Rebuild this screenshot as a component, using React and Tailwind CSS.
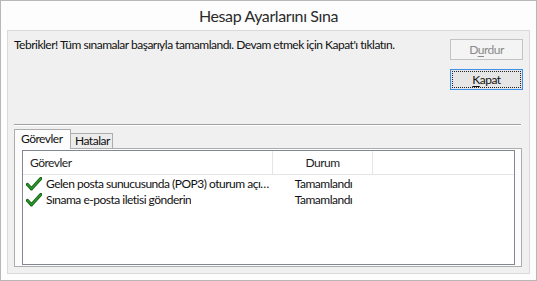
import React from "react";

function Check() {
  return (
    <svg width="16" height="14" viewBox="0 0 16 14" className="shrink-0">
      <path d="M1.5 7.5 L5.5 11.8 L14.8 1.5" fill="none" stroke="#0e5e0e" strokeWidth="3.2" strokeLinecap="round" strokeLinejoin="round" />
      <path d="M1.5 7.5 L5.5 11.8 L14.8 1.5" fill="none" stroke="#2e9a2e" strokeWidth="1.4" strokeLinecap="round" strokeLinejoin="round" />
    </svg>
  );
}

export default function App() {
  const rows = [
    "Gelen posta sunucusunda (POP3) oturum açı…",
    "Sınama e-posta iletisi gönderin",
  ];
  return (
    <div
      className="w-[537px] h-[281px] bg-[#fdfdfd] border border-[#b7b7b7] flex flex-col text-[12px] text-[#111] whitespace-nowrap tracking-[-0.5px]"
      style={{ fontFamily: 'Lato, "Noto Sans", sans-serif' }}
    >
      <div className="h-[29px] flex items-center justify-center text-[16px] tracking-[-0.4px] text-[#2b2b2b] pt-[1px]">
        Hesap Ayarlarını Sına
      </div>
      <div className="mx-[6px] h-[244px] border border-[#dadada] bg-[#f0f0f0] flex flex-col">
        <div className="pt-[8px] pl-[6px] pr-[6px] flex justify-between">
          <div className="flex-1 min-w-0 mt-[-2px] leading-[16px]">
            Tebrikler! Tüm sınamalar başarıyla tamamlandı. Devam etmek için Kapat'ı tıklatın.
          </div>
          <div className="shrink-0 flex flex-col gap-[9px]">
            <div className="w-[73px] h-[21px] border border-[#c4c4c4] bg-[#f4f4f4] text-[#8a8a8a] flex items-center justify-center leading-none">
              <span>D<span className="underline underline-offset-2">u</span>rdur</span>
            </div>
            <div className="w-[73px] h-[21px] border border-[#3c8fe6] bg-[#e6e6e6] p-[1px]">
              <div className="w-full h-full border border-dotted border-[#222] flex items-center justify-center leading-none">
                <span><span className="underline underline-offset-2">K</span>apat</span>
              </div>
            </div>
          </div>
        </div>
        <div className="mt-[34px] ml-[6px] mr-[8px] h-px bg-[#a0a0a0]" />
        <div className="ml-[6px] mr-[8px] h-px bg-[#ffffff]" />
        <div className="mt-[3px] ml-[6px] h-[19px] flex items-start relative z-10">
          <div className="w-[57px] h-[20px] bg-[#fcfcfc] border border-b-0 border-[#adadad] pl-[6px] pt-[1px] leading-[16px]">
            Görevler
          </div>
          <div className="mt-[4px] w-[42px] h-[15px] bg-[#ececec] border border-l-0 border-b-0 border-[#adadad] pl-[4px] leading-[14px]">
            Hatalar
          </div>
        </div>
        <div className="ml-[6px] mr-[7px] h-[119px] border border-[#adadad] bg-[#fcfcfc] pt-[1px] pl-[7px] pr-[6px] pb-[1px]">
          <div className="h-[115px] border border-[#828790] bg-white flex flex-col">
            <div className="h-[24px] flex border-b border-[#e5e5e5] text-[#1e1e1e]">
              <div className="w-[250px] pl-[7px] flex items-center border-r border-[#e5e5e5]">Görevler</div>
              <div className="w-[100px] flex items-center justify-center border-r border-[#e5e5e5]">Durum</div>
            </div>
            <div className="pt-[1px]">
              {rows.map((r, i) => (
                <div key={i} className="h-[16px] flex items-center">
                  <div className="w-[250px] flex items-center pl-[3px] pr-[2px] min-w-0">
                    <Check />
                    <span className="ml-[4px] truncate min-w-0">{r}</span>
                  </div>
                  <div className="w-[101px] text-center">Tamamlandı</div>
                </div>
              ))}
            </div>
          </div>
        </div>
      </div>
    </div>
  );
}
